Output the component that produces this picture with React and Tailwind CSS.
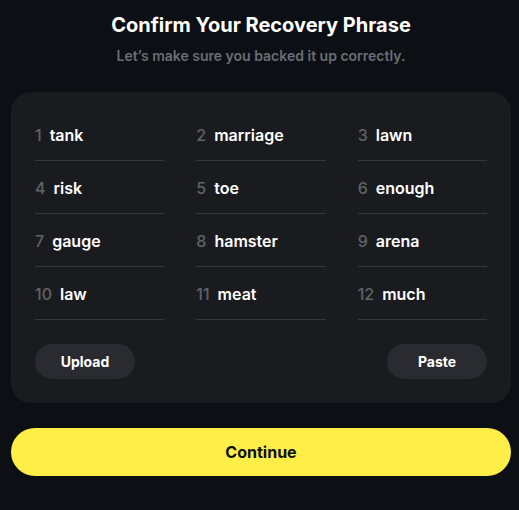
import React from "react";

const words = [
  "tank", "marriage", "lawn",
  "risk", "toe", "enough",
  "gauge", "hamster", "arena",
  "law", "meat", "much",
];

export default function App() {
  return (
    <div
      className="min-h-screen w-full bg-[#0c0f14] text-white"
      style={{ fontFamily: "Inter, 'Noto Sans', sans-serif" }}
    >
      <div className="ml-[11px] w-[500px] pt-[11px]">
        {/* Header */}
        <h1 className="text-center text-[20px] leading-7 font-bold">
          Confirm Your Recovery Phrase
        </h1>
        <p className="mt-[7px] text-center text-[14px] leading-5 font-semibold text-[#6a6e75]">
          Let’s make sure you backed it up correctly.
        </p>

        {/* Words card */}
        <div className="mt-[26px] rounded-[20px] bg-[#1a1b1f] px-6 pt-4 pb-6">
          <div className="grid grid-cols-3 gap-x-8">
            {words.map((w, i) => (
              <div
                key={i}
                className="flex items-center gap-[8px] border-b border-[#36373c] pt-[17px] pb-[15px] text-[16px] leading-5"
              >
                <span className="font-medium text-[#5f636a]">{i + 1}</span>
                <span className="font-semibold text-white">{w}</span>
              </div>
            ))}
          </div>

          <div className="mt-6 flex justify-between">
            <button className="h-[35px] w-[100px] rounded-full bg-[#2a2b30] text-[14px] font-bold text-white">
              Upload
            </button>
            <button className="h-[35px] w-[100px] rounded-full bg-[#2a2b30] text-[14px] font-bold text-white">
              Paste
            </button>
          </div>
        </div>

        {/* Continue */}
        <button className="mt-[25px] h-[48px] w-full rounded-full bg-[#ffee47] text-[16px] font-bold text-[#0c0f14]">
          Continue
        </button>
      </div>
    </div>
  );
}
